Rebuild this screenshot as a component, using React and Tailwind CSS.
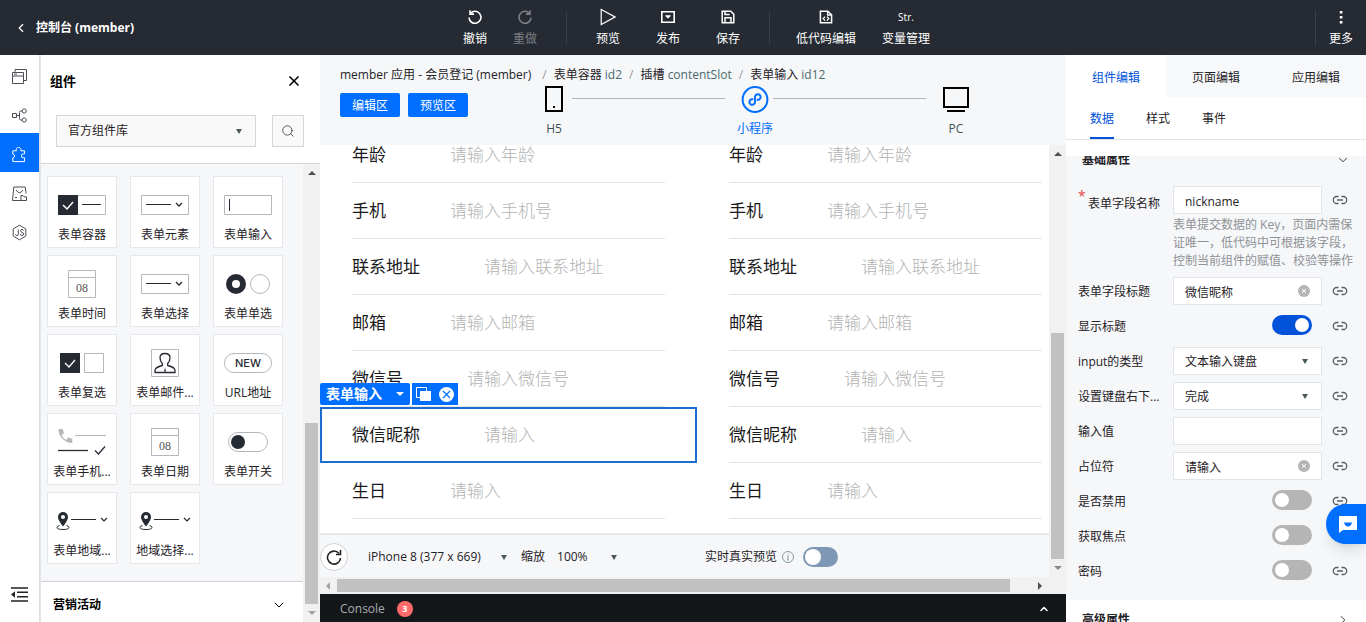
import React from 'react';
import { X, ChevronDown, ChevronUp, ChevronLeft, ChevronRight, Search } from 'lucide-react';

const ICONS = {
    undo: (
        <svg width="16" height="16" viewBox="0 0 16 16" fill="none" stroke="currentColor" strokeWidth="1.6">
            <path d="M3.6 4.2A6 6 0 1 1 2 8.6" />
            <path d="M3 1.2v3.9h4" />
        </svg>
    ),
    redo: (
        <svg width="16" height="16" viewBox="0 0 16 16" fill="none" stroke="currentColor" strokeWidth="1.6">
            <path d="M12.4 4.2A6 6 0 1 0 14 8.6" />
            <path d="M13 1.2v3.9H9" />
        </svg>
    ),
    play: (
        <svg width="16" height="18" viewBox="0 0 16 18" fill="none" stroke="currentColor" strokeWidth="1.2">
            <path d="M1.2 1.4v15.2L15 9z" />
        </svg>
    ),
    publish: (
        <svg width="16" height="16" viewBox="0 0 16 16" fill="none" stroke="currentColor" strokeWidth="1.6">
            <path d="M1.8 2.8h12.4v10.4H1.8z" />
            <path d="M5.6 6.8h4.8L8 9.2z" fill="currentColor" strokeWidth="1" />
        </svg>
    ),
    save: (
        <svg width="16" height="16" viewBox="0 0 16 16" fill="none" stroke="currentColor" strokeWidth="1.5">
            <path d="M2.2 2.2h8.6l3 3v8.6H2.2z" />
            <path d="M5 13.6V8.8h6v4.8M5 2.4v3.2h4.6" />
        </svg>
    ),
    code: (
        <svg width="16" height="16" viewBox="0 0 16 16" fill="none" stroke="currentColor" strokeWidth="1.5">
            <path d="M2.4 2.2h7.4l3.8 3.6v8H2.4z" />
            <path d="M9.6 2.4v3.6h3.8M7 7.6L5.2 9.6 7 11.6M9 7.6l1.8 2L9 11.6" strokeWidth="1.3" />
        </svg>
    ),
    more: (
        <svg width="16" height="16" viewBox="0 0 16 16" fill="currentColor">
            <path d="M6.8 2h2.6v2.4H6.8zM6.8 7h2.6v2.4H6.8zM6.8 12h2.6v2.4H6.8z" />
        </svg>
    ),
};

const ToolButton = ({ icon, label, width = 'w-[60px]', muted }) => (
    <button type="button" className={`${width} flex flex-col items-center gap-1 ${muted ? 'text-[#7c7f84]' : 'text-white'}`}>
        <span className="h-[18px] flex items-center text-[10px]">{icon}</span>
        <span className="leading-[18px] whitespace-nowrap">{label}</span>
    </button>
);

const Header = () => (
    <header className="h-[55px] shrink-0 bg-[#262b33] text-white flex items-center">
        <div className="w-[450px] shrink-0 pl-[14px] pt-1">
            <a href="#console" className="inline-flex items-center gap-2 font-bold">
                <ChevronLeft size={14} strokeWidth={2} />
                控制台 (member)
            </a>
        </div>
        <nav className="flex items-center">
            <ToolButton icon={ICONS.undo} label="撤销" width="w-[50px]" />
            <ToolButton icon={ICONS.redo} label="重做" width="w-[50px]" muted />
            <span className="w-px h-8 ml-4 mr-[11px] bg-[#3b4048]" />
            <ToolButton icon={ICONS.play} label="预览" />
            <ToolButton icon={ICONS.publish} label="发布" />
            <ToolButton icon={ICONS.save} label="保存" />
            <span className="w-px h-8 ml-[11px] mr-4 bg-[#3b4048]" />
            <ToolButton icon={ICONS.code} label="低代码编辑" width="w-20" />
            <ToolButton icon="Str." label="变量管理" width="w-20" />
        </nav>
        <div className="ml-auto flex items-center">
            <span className="w-px h-9 bg-[#3b4048]" />
            <ToolButton icon={ICONS.more} label="更多" width="w-[50px]" />
        </div>
    </header>
);

const RAIL = [
    {
        name: '页面',
        icon: <path d="M1.5 4.5h11v11h-11zM1.5 8h11M4 4.5v-3h11.5v11h-3M3 6.2h3" />,
    },
    {
        name: '数据',
        icon: <path d="M1.5 6.5h4v4h-4zM5.5 8.5h3M11 4h-1.2Q8.5 4 8.5 5.5v6Q8.5 13 9.8 13H11M13.2 1.9a2.1 2.1 0 1 1 0 4.2a2.1 2.1 0 0 1 0-4.2M13.2 10.9a2.1 2.1 0 1 1 0 4.2a2.1 2.1 0 0 1 0-4.2" />,
    },
    {
        name: '组件',
        active: true,
        icon: <path d="M1.8 4.8h3.6a2.4 2.4 0 1 1 4.4 0h3.8v3h-1.2a2 2 0 1 0 0 4h1.2v3.8H1.8V12q1.8-.4 1.8-1.9T1.8 8.2z" />,
    },
    {
        name: '素材',
        icon: <path d="M10 15.5H1.5L2.8 2h11.4l.9 6.5M5 5q3.5 5.5 7 0M10 15.5v-5h2l1 1.3h2.5v3.7zM4 12.5h2" />,
    },
    {
        name: '脚本',
        icon: <path d="M8.5 1.2l6.3 3.7v7.2l-6.3 3.7-6.3-3.7V4.9zM7.3 5.5v4.7q0 1.4-1.4 1.4-1.3 0-1.5-1.3M12.5 6.6q-.3-1.2-1.5-1.2-1.4 0-1.4 1.4 0 1 1.4 1.5 1.6.5 1.6 1.7 0 1.5-1.6 1.5-1.5 0-1.7-1.4" />,
    },
];

const Rail = () => (
    <nav className="w-10 shrink-0 bg-white border-r border-[#dcdfe3] flex flex-col">
        {RAIL.map((item) => (
            <button
                key={item.name}
                type="button"
                aria-label={item.name}
                className={`w-[39px] h-[39px] pt-1 flex items-center justify-center ${item.active ? 'bg-[#006eff] text-white' : 'text-[#4b4f55]'}`}
            >
                <svg width="17" height="17" viewBox="0 0 17 17" fill="none" stroke="currentColor">
                    {item.icon}
                </svg>
            </button>
        ))}
        <button type="button" aria-label="收起" className="w-[39px] h-[39px] mt-auto mb-2 flex items-center justify-center text-[#222]">
            <svg width="17" height="15" viewBox="0 0 17 15" fill="none" stroke="currentColor" strokeWidth="1.6">
                <path d="M0 1h17M6 5.3h11M6 9.7h11M0 14h17" />
                <path d="M4 4.2v6.6L0 7.5z" fill="currentColor" stroke="none" />
            </svg>
        </button>
    </nav>
);

const Calendar = () => (
    <svg width="28" height="28" viewBox="0 0 28 28" fill="none" stroke="#b4b7bb">
        <path d="M.5.5h27v27H.5zM.5 7.5h27" />
        <text x="14" y="22" textAnchor="middle" fontSize="12" fill="#555" stroke="none" fontFamily="Liberation Serif, serif">08</text>
    </svg>
);

const SelectGlyph = () => (
    <svg width="48" height="20" viewBox="0 0 48 20" fill="none" stroke="#262b33">
        <path d="M.5.5h47v19H.5z" stroke="#b4b7bb" />
        <path d="M5 9.5h25" />
        <path d="M35 8l3 3 3-3" strokeWidth="1.3" />
    </svg>
);

const PinGlyph = () => (
    <svg width="52" height="20" viewBox="0 0 52 20" fill="none" stroke="#262b33">
        <path d="M7 1a5 5 0 0 0-5 5c0 3.6 5 9.5 5 9.5s5-5.900 5-9.5a5 5 0 0 0-5-5z" fill="#262b33" stroke="none" />
        <circle cx="7" cy="6" r="2" fill="#fff" stroke="none" />
        <path d="M3.5 14.5Q1 15.2 1 16.4 1 18.5 7 18.5t6-2.1q0-1.2-2.5-1.9" />
        <path d="M15 8.5h25M45 7l3 3 3-3" strokeWidth="1.2" />
    </svg>
);

const COMPONENTS = [
    {
        label: '表单容器',
        glyph: (
            <svg width="48" height="20" viewBox="0 0 48 20" fill="none">
                <path d="M.5.5h47v19H.5z" stroke="#b4b7bb" />
                <path d="M0 0h20v20H0z" fill="#262b33" />
                <path d="M5 10l4 4 6-7" stroke="#fff" strokeWidth="1.5" />
                <path d="M24 9.5h19" stroke="#262b33" />
            </svg>
        ),
    },
    { label: '表单元素', glyph: <SelectGlyph /> },
    {
        label: '表单输入',
        glyph: (
            <svg width="48" height="20" viewBox="0 0 48 20" fill="none">
                <path d="M.5.5h47v19H.5z" stroke="#b4b7bb" />
                <path d="M5.5 4v12" stroke="#262b33" />
            </svg>
        ),
    },
    { label: '表单时间', glyph: <Calendar /> },
    { label: '表单选择', glyph: <SelectGlyph /> },
    {
        label: '表单单选',
        glyph: (
            <svg width="44" height="20" viewBox="0 0 44 20" fill="none">
                <circle cx="10" cy="10" r="7" stroke="#262b33" strokeWidth="6" />
                <circle cx="34" cy="10" r="9.5" stroke="#b4b7bb" />
            </svg>
        ),
    },
    {
        label: '表单复选',
        glyph: (
            <svg width="44" height="20" viewBox="0 0 44 20" fill="none">
                <path d="M0 0h20v20H0z" fill="#262b33" />
                <path d="M5 10l4 4 6-7" stroke="#fff" strokeWidth="1.3" />
                <path d="M24.5.5h19v19h-19z" stroke="#b4b7bb" />
            </svg>
        ),
    },
    {
        label: '表单邮件...',
        glyph: (
            <svg width="28" height="28" viewBox="0 0 28 28" fill="none">
                <path d="M.5.5h27v27H.5z" stroke="#b4b7bb" />
                <path d="M11.3 14.5Q9 12 9 8.8 9 4.5 14 4.5t5 4.3q0 3.2-2.3 5.7v2q7.3 1.8 7.3 5v2H4v-2q0-3.2 7.3-5z" stroke="#262b33" strokeWidth="1.3" />
                <path d="M14 18.5l1 4h-2z" fill="#262b33" />
            </svg>
        ),
    },
    {
        label: 'URL地址',
        glyph: (
            <span className="w-12 h-5 rounded-full border border-[#b4b7bb] flex items-center justify-center text-[11px] font-medium text-[#262b33] font-['Inter',sans-serif]">
                NEW
            </span>
        ),
    },
    {
        label: '表单手机...',
        glyph: (
            <svg width="50" height="28" viewBox="0 0 50 28" fill="none">
                <path d="M1.5 1h4.2l1.2 4.2-2.3 2q1.6 3.2 4.5 4.7l2-2.3 4.2 1.2v4.2Q10 15 5.7 11T1.5 1z" fill="#b4b7bb" />
                <path d="M18 7.5h31" stroke="#b4b7bb" />
                <path d="M1 22.5h30" stroke="#262b33" strokeWidth="1.3" />
                <path d="M38 22.5l3.5 3.5L48 18.5" stroke="#262b33" strokeWidth="1.3" />
            </svg>
        ),
    },
    { label: '表单日期', glyph: <Calendar /> },
    {
        label: '表单开关',
        glyph: (
            <svg width="40" height="20" viewBox="0 0 40 20" fill="none">
                <rect x=".5" y=".5" width="39" height="19" rx="9.5" stroke="#b4b7bb" />
                <circle cx="10" cy="10" r="7" fill="#262b33" />
            </svg>
        ),
    },
    { label: '表单地域...', glyph: <PinGlyph /> },
    { label: '地域选择...', glyph: <PinGlyph /> },
];

const Arrow = ({ dir = 'down', className = 'text-[#505050]' }) => {
    const shapes = {
        up: 'M0 6l4-4 4 4z',
        down: 'M0 2l4 4 4-4z',
        left: 'M6 0L2 4l4 4z',
        right: 'M2 0l4 4-4 4z',
    };
    return (
        <svg width="8" height="8" viewBox="0 0 8 8" fill="currentColor" className={`shrink-0 ${className}`}>
            <path d={shapes[dir]} />
        </svg>
    );
};

const Caret = () => (
    <svg width="6" height="5" viewBox="0 0 6 5" fill="#4a5a5c" className="pointer-events-none shrink-0">
        <path d="M0 0h6L3 5z" />
    </svg>
);

const ComponentPanel = () => (
    <aside className="w-[280px] shrink-0 bg-white border-l border-[#e3e5e8] flex flex-col">
        <div className="h-[52px] pl-[9px] pr-[18px] flex items-center justify-between">
            <h2 className="text-[13px] font-bold text-black">组件</h2>
            <button type="button" aria-label="关闭" className="text-black">
                <X size={16} strokeWidth={2.5} />
            </button>
        </div>
        <div className="pl-[15px] pt-2 pb-4 flex gap-4">
            <label className="w-[200px] h-8 pr-[13px] flex items-center border border-[#d5d7da] bg-[#f9f9f9]">
                <select aria-label="组件库" className="appearance-none flex-1 h-full pl-[11px] outline-none">
                    <option>官方组件库</option>
                </select>
                <Caret />
            </label>
            <button type="button" aria-label="搜索" className="w-8 h-8 flex items-center justify-center border border-[#d5d7da] bg-[#f9f9f9] text-[#444]">
                <Search size={14} strokeWidth={1.5} />
            </button>
        </div>
        <div className="flex-1 min-h-0 flex border-t border-[#d5d7da]">
            <div className="flex-1 overflow-hidden bg-[#f6f7f9]">
                <div className="grid grid-cols-[70px_70px_70px] gap-x-[13px] gap-y-[7px] pl-[6px] pt-3 pb-[17px]">
                    {COMPONENTS.map((item) => (
                        <div key={item.label} className="h-[72px] bg-white border border-[#e6e8eb] flex flex-col items-center">
                            <div className="h-12 pt-2 flex items-center">{item.glyph}</div>
                            <span className="leading-5 whitespace-nowrap">{item.label}</span>
                        </div>
                    ))}
                </div>
                <button type="button" className="w-full h-[46px] pl-3 pr-4 flex items-center justify-between bg-white border-t border-[#cfd2d6] font-bold text-black">
                    营销活动
                    <ChevronDown size={16} strokeWidth={1.5} />
                </button>
            </div>
            <div className="w-[17px] shrink-0 py-[5px] flex flex-col items-center gap-[5px] bg-[#f1f1f1]">
                <Arrow dir="up" />
                <div className="flex-1 w-[13px] flex flex-col justify-end">
                    <div className="h-[43%] bg-[#c1c1c1]" />
                </div>
                <Arrow className="text-[#a3a3a3]" />
            </div>
        </div>
    </aside>
);

const CRUMBS = [
    { text: '表单容器', id: 'id2' },
    { text: '插槽', id: 'contentSlot' },
    { text: '表单输入', id: 'id12' },
];

const CanvasToolbar = () => (
    <div className="h-[90px] shrink-0 px-5 bg-[#f6f7f9]">
        <ol className="h-[31px] pt-2 flex items-center gap-[7px] whitespace-nowrap">
            <li className="mr-1">member 应用 - 会员登记 (member)</li>
            {CRUMBS.map((c) => (
                <li key={c.id} className="flex gap-[7px]">
                    <span className="text-[#999]">/</span>
                    <a href={`#${c.id}`}>
                        {c.text} <span className="text-[#4a6a70]">{c.id}</span>
                    </a>
                </li>
            ))}
        </ol>
        <div className="flex items-start">
            <div className="pt-[7px] flex gap-2 text-white">
                <button type="button" className="w-[60px] h-6 pt-[2px] rounded-xs bg-[#006eff]">编辑区</button>
                <button type="button" className="w-[60px] h-6 pt-[2px] rounded-xs bg-[#006eff]">预览区</button>
            </div>
            <div className="w-[438px] ml-[68px] flex items-start">
                <button type="button" className="w-9 flex flex-col items-center gap-[7px] text-[#3d5055]">
                    <svg width="28" height="27" viewBox="0 0 28 27" fill="none">
                        <path d="M6 1h16v24H6z" stroke="#000" strokeWidth="2" />
                        <path d="M13 20h2v2h-2z" fill="#000" />
                    </svg>
                    <span className="leading-[18px]">H5</span>
                </button>
                <span className="flex-1 h-px mt-3 mr-3 bg-[#b3b6ba]" />
                <button type="button" className="w-9 flex flex-col items-center gap-[7px] text-[#006eff] whitespace-nowrap">
                    <svg width="28" height="27" viewBox="0 0 28 27" fill="none" stroke="#006eff">
                        <circle cx="14" cy="13.5" r="12.4" strokeWidth="2" />
                        <path d="M11.5 13.2a2.8 2.8 0 1 0 2.5 2.8v-5a2.8 2.8 0 1 1 2.5 2.8" strokeWidth="2" strokeLinecap="round" />
                    </svg>
                    <span className="leading-[18px]">小程序</span>
                </button>
                <span className="flex-1 h-px mt-3 mr-3 bg-[#b3b6ba]" />
                <button type="button" className="w-9 flex flex-col items-center gap-[7px] text-[#3d5055]">
                    <svg width="28" height="27" viewBox="0 0 28 27" fill="none" stroke="#000" strokeWidth="2">
                        <path d="M2 2h24v19H2zM5 25h18" />
                    </svg>
                    <span className="leading-[18px]">PC</span>
                </button>
            </div>
        </div>
    </div>
);

const FIELDS = [
    { label: '年龄', hint: '请输入年龄' },
    { label: '手机', hint: '请输入手机号' },
    { label: '联系地址', hint: '请输入联系地址' },
    { label: '邮箱', hint: '请输入邮箱' },
    { label: '微信号', hint: '请输入微信号' },
    { label: '微信昵称', hint: '请输入' },
    { label: '生日', hint: '请输入' },
];

const Selection = () => (
    <div className="absolute -inset-x-8 top-0 -bottom-px border-2 border-[#1c6dd0] pointer-events-none">
        <div className="absolute -top-[26px] -left-[2px] flex gap-[2px] text-white">
            <span className="w-[90px] h-[22px] px-[6px] flex items-center justify-between rounded-xs bg-[#006eff] text-[14px] font-bold whitespace-nowrap">
                表单输入
                <Arrow className="text-white" />
            </span>
            <span className="w-[46px] h-[22px] flex items-center justify-center gap-2 bg-[#006eff]">
                <svg width="15" height="15" viewBox="0 0 15 15" fill="none">
                    <path d="M.5.5h10v10H.5z" stroke="#fff" />
                    <path d="M4 4h11v10H4z" fill="#fff" />
                </svg>
                <svg width="15" height="15" viewBox="0 0 15 15" fill="none">
                    <circle cx="7.5" cy="7.5" r="7.5" fill="#fff" />
                    <path d="M4 4l7 7M11 4l-7 7" stroke="#006eff" strokeWidth="1.2" />
                </svg>
            </span>
        </div>
    </div>
);

const Phone = ({ name, selected }) => (
    <form className="w-[377px] shrink-0 px-8 pb-[14px] flex flex-col justify-end bg-white">
        {FIELDS.map((f) => (
            <div key={f.label} className="relative h-14 shrink-0 flex items-center border-b border-[#e5e5e5] text-[17px]">
                <label htmlFor={`${name}-${f.label}`} className="mr-16 text-[#1a1a1a] whitespace-nowrap">{f.label}</label>
                <input
                    id={`${name}-${f.label}`}
                    placeholder={f.hint}
                    className="flex-1 min-w-0 outline-none font-light placeholder:text-[#b2b2b2]"
                />
                {selected === f.label && <Selection />}
            </div>
        ))}
    </form>
);

const DeviceBar = () => (
    <div className="h-11 shrink-0 pt-[2px] bg-[#f6f7f9] border-t-2 border-[#e6e8eb] flex items-center whitespace-nowrap">
        <button type="button" aria-label="刷新" className="w-7 h-7 rounded-full bg-white border border-[#cfd2d6] flex items-center justify-center text-[#222]">
            <svg width="16" height="16" viewBox="0 0 16 16" fill="none" stroke="currentColor" strokeWidth="1.6">
                <path d="M13 4.4A6.5 6.5 0 1 0 14.5 9" />
                <path d="M14.5 1v4.5H10" />
            </svg>
        </button>
        <label className="w-[139px] ml-5 flex items-center">
            <select aria-label="设备" className="appearance-none flex-1 outline-none">
                <option>iPhone 8 (377 x 669)</option>
            </select>
            <Caret />
        </label>
        <label className="w-[96px] ml-[14px] flex items-center">
            缩放
            <select className="appearance-none flex-1 min-w-0 ml-3 outline-none">
                <option>100%</option>
            </select>
            <Caret />
        </label>
        <div className="ml-[88px] flex items-center">
            <label htmlFor="live">实时真实预览</label>
            <svg width="12" height="12" viewBox="0 0 12 12" fill="none" stroke="#8a9a9c" className="ml-[5px] mr-[9px]">
                <circle cx="6" cy="6" r="5.5" />
                <path d="M6.8 2.5l-.2 1M5 5.2h1.3L5.6 9h1.3" />
            </svg>
            <input
                id="live"
                type="checkbox"
                role="switch"
                className="appearance-none w-[35px] h-5 p-[2px] rounded-full bg-[#7e97b5] before:content-[''] before:block before:w-4 before:h-4 before:rounded-full before:bg-white"
            />
        </div>
    </div>
);

const Canvas = () => (
    <main className="flex-1 min-w-0 flex flex-col">
        <CanvasToolbar />
        <div className="flex-1 min-h-0 flex">
            <div className="flex-1 min-w-0 flex flex-col">
                <div className="flex-1 min-h-0 flex overflow-hidden bg-white">
                    <Phone name="edit" selected="微信昵称" />
                    <Phone name="preview" />
                </div>
                <DeviceBar />
            </div>
            <div className="w-[17px] shrink-0 py-[5px] flex flex-col items-center gap-[5px] bg-[#f1f1f1]">
                <Arrow dir="up" />
                <div className="flex-1 w-[13px] flex flex-col justify-end">
                    <div className="h-[57%] bg-[#c1c1c1]" />
                </div>
                <Arrow className="text-[#8a8a8a]" />
            </div>
        </div>
        <div className="h-[17px] shrink-0 pl-1 pr-[22px] flex items-center gap-[5px] bg-[#f1f1f1]">
            <Arrow dir="left" className="text-[#a3a3a3]" />
            <div className="flex-1 h-[13px]">
                <div className="w-[97%] h-full bg-[#c1c1c1]" />
            </div>
            <Arrow dir="right" />
        </div>
        <button type="button" className="h-7 shrink-0 pl-5 pr-4 pt-[2px] flex items-center bg-[#14171a] text-[#a9acb0]">
            Console
            <span className="w-4 h-4 ml-3 rounded-full bg-[#ff6b6b] text-white text-[9px] font-bold flex items-center justify-center">3</span>
            <ChevronUp size={12} strokeWidth={3} className="ml-auto text-white" />
        </button>
    </main>
);

const LinkButton = () => (
    <button type="button" aria-label="绑定数据" className="w-11 pr-2 shrink-0 flex justify-center text-[#5a5d61]">
        <svg width="16" height="10" viewBox="0 0 16 10" fill="none" stroke="currentColor" strokeWidth="1.3">
            <path d="M6.5 1.5H4.8a3.5 3.5 0 0 0 0 7h1.7M9.5 1.5h1.7a3.5 3.5 0 0 1 0 7H9.5M5 5h6" />
        </svg>
    </button>
);

const Row = ({ id, label, required, children }) => (
    <div className="h-7 flex items-center">
        <label htmlFor={id} className={`relative w-[95px] shrink-0 whitespace-nowrap ${required ? 'pt-2 pl-[10px]' : 'pt-[2px]'}`}>
            {label}
            {required && <span className="absolute top-0 left-0 text-[14px] text-[#e54545]">*</span>}
        </label>
        <div className="flex-1 min-w-0 flex justify-end">{children}</div>
        <LinkButton />
    </div>
);

const TextField = ({ id, value, clearable }) => (
    <div className="w-full h-7 pr-[11px] flex items-center bg-white border border-[#e1e4e8]">
        <input id={id} defaultValue={value} className="flex-1 min-w-0 h-full pl-[11px] pt-[2px] outline-none" />
        {clearable && (
            <button type="button" aria-label="清除">
                <svg width="12" height="12" viewBox="0 0 12 12" fill="none">
                    <circle cx="6" cy="6" r="6" fill="#b5b5b5" />
                    <path d="M4 4l4 4M8 4L4 8" stroke="#fff" />
                </svg>
            </button>
        )}
    </div>
);

const SelectField = ({ id, value }) => (
    <div className="w-full h-7 pr-[13px] flex items-center bg-white border border-[#e1e4e8]">
        <select id={id} className="appearance-none flex-1 min-w-0 h-full pl-[11px] pt-[2px] outline-none">
            <option>{value}</option>
        </select>
        <Caret />
    </div>
);

const Switch = ({ id, on }) => (
    <input
        id={id}
        type="checkbox"
        role="switch"
        defaultChecked={on}
        className="appearance-none w-10 h-5 mr-[10px] mb-[2px] p-[3px] rounded-full bg-[#b5b5b5] checked:bg-[#0052d9] before:content-[''] before:block before:w-[14px] before:h-[14px] before:rounded-full before:bg-white checked:before:ml-auto"
    />
);

const PropertyPanel = () => (
    <aside className="w-[300px] shrink-0 bg-white flex flex-col">
        <div className="h-[42px] shrink-0 grid grid-cols-3 bg-[#f7f8f9]">
            <button type="button" className="pt-[3px] bg-white text-[#0052d9]">组件编辑</button>
            <button type="button" className="pt-[3px]">页面编辑</button>
            <button type="button" className="pt-[3px]">应用编辑</button>
        </div>
        <div className="h-[43px] shrink-0 px-6 flex gap-8 border-b border-[#dfe3e8]">
            <button type="button" className="pt-1 border-b-2 border-[#0052d9] text-[#0052d9]">数据</button>
            <button type="button" className="pt-1 border-b-2 border-transparent">样式</button>
            <button type="button" className="pt-1 border-b-2 border-transparent">事件</button>
        </div>
        <div className="flex-1 min-h-0 mt-4 overflow-hidden">
            <section className="pl-3 pb-[15px] bg-[#f6f7f9]">
                <div className="h-8 -mt-3 pl-1 pr-4 flex items-center justify-between">
                    <h3 className="font-bold">基础属性</h3>
                    <ChevronDown size={14} strokeWidth={1.5} />
                </div>
                <div className="pt-[10px] flex flex-col gap-[7px]">
                    <div>
                        <Row id="name" label="表单字段名称" required>
                            <TextField id="name" value="nickname" />
                        </Row>
                        <p className="ml-[95px] mr-2 pt-[2px] leading-[18px] text-[#8f9296]">
                            表单提交数据的 Key，页面内需保证唯一，低代码中可根据该字段，控制当前组件的赋值、校验等操作
                        </p>
                    </div>
                    <Row id="title" label="表单字段标题">
                        <TextField id="title" value="微信昵称" clearable />
                    </Row>
                    <Row id="show-title" label="显示标题">
                        <Switch id="show-title" on />
                    </Row>
                    <Row id="input-type" label="input的类型">
                        <SelectField id="input-type" value="文本输入键盘" />
                    </Row>
                    <Row id="confirm" label="设置键盘右下...">
                        <SelectField id="confirm" value="完成" />
                    </Row>
                    <Row id="value" label="输入值">
                        <TextField id="value" />
                    </Row>
                    <Row id="placeholder" label="占位符">
                        <TextField id="placeholder" value="请输入" clearable />
                    </Row>
                    <Row id="disabled" label="是否禁用">
                        <Switch id="disabled" />
                    </Row>
                    <Row id="focus" label="获取焦点">
                        <Switch id="focus" />
                    </Row>
                    <Row id="password" label="密码">
                        <Switch id="password" />
                    </Row>
                </div>
            </section>
            <button type="button" className="w-full h-10 pl-4 pr-4 flex items-center justify-between bg-white font-bold">
                高级属性
                <ChevronRight size={14} strokeWidth={1.5} />
            </button>
        </div>
    </aside>
);

const App = () => {
    return (
        <div className="relative h-screen flex flex-col overflow-hidden bg-white text-[12px] leading-[18px] text-[#1f2226] font-['Open_Sans','Noto_Sans_CJK_SC',sans-serif]">
            <Header />
            <div className="flex-1 min-h-0 flex">
                <Rail />
                <ComponentPanel />
                <Canvas />
                <PropertyPanel />
            </div>
            <button type="button" aria-label="在线咨询" className="absolute right-0 bottom-[78px] w-10 h-10 pl-1 rounded-l-full bg-[#006eff] shadow-lg flex items-center justify-center">
                <svg width="18" height="17" viewBox="0 0 18 17" fill="none">
                    <path d="M0 0h18v14H4l-4 3z" fill="#fff" />
                    <path d="M5 6.5h8q-1 4-4 4t-4-4z" fill="#006eff" />
                </svg>
            </button>
        </div>
    );
};

export default App;
